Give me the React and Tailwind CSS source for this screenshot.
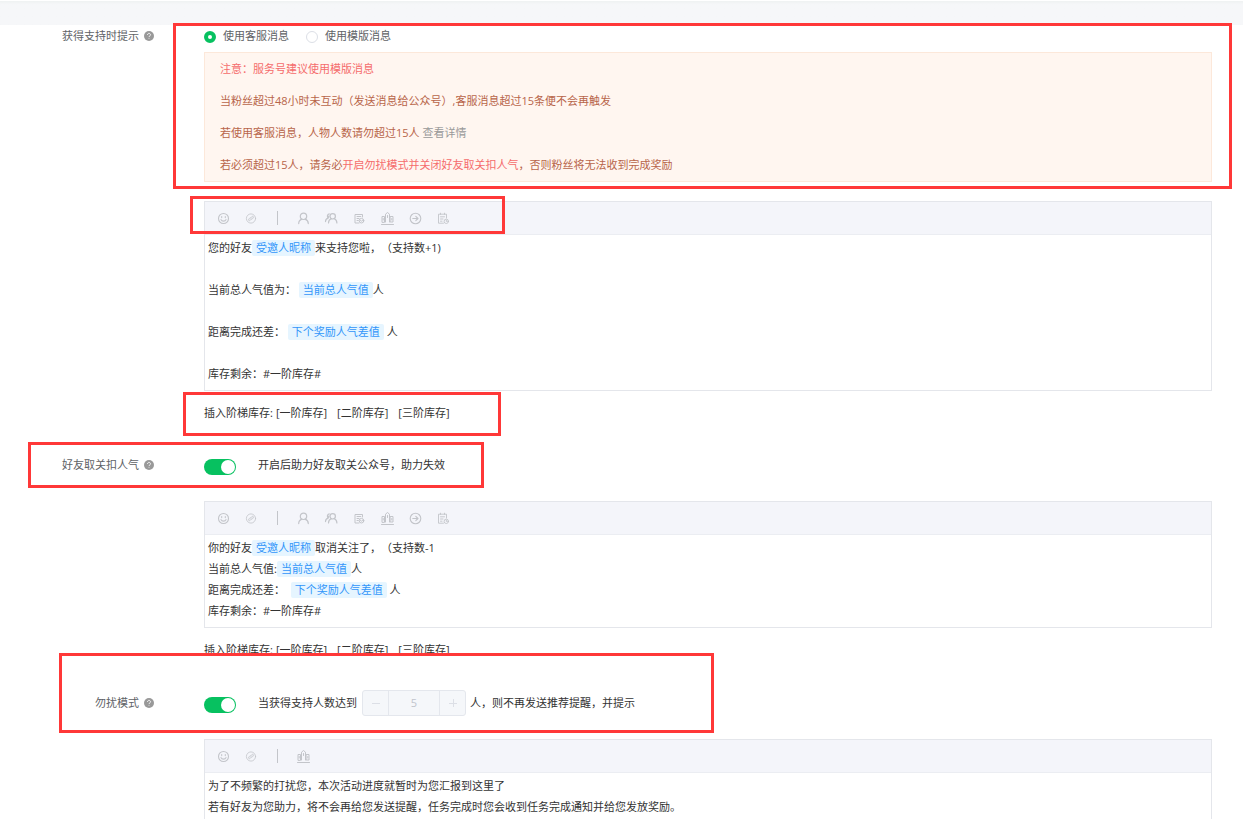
import React from "react";

const iconProps = {
  width: 14,
  height: 14,
  viewBox: "0 0 14 14",
  fill: "none",
  stroke: "currentColor",
  strokeWidth: 1.1,
  strokeLinecap: "round",
  strokeLinejoin: "round",
  "aria-hidden": true,
};

const SmileIcon = () => (
  <svg {...iconProps}>
    <circle cx="7.5" cy="7.5" r="5" />
    <path d="M5.7 5.6v1M9.3 5.6v1M5 8.6c.8 2 4.2 2 5 0" />
  </svg>
);

const LinkIcon = () => (
  <svg {...iconProps} strokeWidth="0.8">
    <circle cx="7" cy="7.5" r="4.6" />
    <path d="M6.8 6.6l1-1c1-1 2.4.4 1.4 1.4l-1.200 1.200M7.200 8.400l-1 1c-1 1-2.400-.4-1.400-1.400l1.200-1.200M6.200 8.300l1.600-1.600" />
  </svg>
);

const UserIcon = () => (
  <svg {...iconProps} strokeWidth="1.2">
    <circle cx="7.5" cy="5.3" r="3.2" />
    <path d="M2.7 12.6c0-2.4 1.3-3.800 3.200-4.500M12.300 12.600c0-2.400-1.300-3.800-3.200-4.500" />
  </svg>
);

const UsersIcon = () => (
  <svg {...iconProps} strokeWidth="1.2">
    <circle cx="8.700" cy="5.300" r="2.700" />
    <path d="M4.500 12c0-2.200 1-3.500 2.600-4.200M12.900 12c0-2.200-1-3.500-2.600-4.200M5.200 2.800C3.200 3 2.900 6 4.200 7.200 2.600 7.600 1.500 9 1.500 10.600M4.800 5.200l-.6 1.800" />
  </svg>
);

const FormIcon = () => (
  <svg {...iconProps} strokeWidth="1">
    <path d="M10.500 6V3.500h-7.500v8.500h4M5 5.500h3.800M5 7.500h2M5 9.500h1.300" />
    <circle cx="9.500" cy="9.700" r="2.300" />
    <path d="M8.500 9.500l1 .8 1.300-1.300" />
  </svg>
);

const RankIcon = () => (
  <svg {...iconProps} strokeWidth="1">
    <path d="M1.500 13.500h12M2 11V5.500h2.500V11zM5.500 11V3.200l2-1.700 2 1.700V11M10.500 5.500h2.500V11h-2.500zM7.500 4.500v2M3.200 7.500v1.500M11.800 7.500v1.500" />
  </svg>
);

const ArrowIcon = () => (
  <svg {...iconProps}>
    <circle cx="7.5" cy="7.5" r="5.3" />
    <path d="M4.800 7.500h5M7.800 5.300l2.200 2.200-2.200 2.200" />
  </svg>
);

const TaskIcon = () => (
  <svg {...iconProps} strokeWidth="0.9">
    <path d="M10.500 7V3.200h-8v9h5M4.500 2.200v1.200M8.500 2.200v1.200M4.500 5.800h4M4.500 8h2.500M4.500 10.200h1.500" />
    <circle cx="10.300" cy="10.300" r="2.200" />
    <path d="M10.300 9.200v1.200h1" />
  </svg>
);

const leadTools = [
  ["表情", SmileIcon],
  ["链接", LinkIcon],
];

const fullTools = [
  ["昵称", UserIcon],
  ["好友", UsersIcon],
  ["表单", FormIcon],
  ["排行", RankIcon],
  ["跳转", ArrowIcon],
  ["任务", TaskIcon],
];

const shortTools = [["排行", RankIcon]];

function ToolButton({ label, Icon }) {
  return (
    <button type="button" aria-label={label} className="h-3.5 w-3.5 shrink-0">
      <Icon />
    </button>
  );
}

function Editor({ label, tools, className, children }) {
  return (
    <div className={`flex flex-col border border-[#e4e6eb] ${className}`}>
      <div className="flex h-[33px] shrink-0 items-center gap-3.5 border-b border-[#ebedf2] bg-[#f4f5fa] pl-[11px] text-[#c3c5ca]">
        {leadTools.map(([name, Icon]) => (
          <ToolButton key={name} label={name} Icon={Icon} />
        ))}
        <span className="flex w-2.5 justify-center">
          <span className="h-3.5 w-px bg-[#c3c5ca]" />
        </span>
        {tools.map(([name, Icon]) => (
          <ToolButton key={name} label={name} Icon={Icon} />
        ))}
      </div>
      <div
        role="textbox"
        aria-multiline="true"
        aria-label={label}
        contentEditable
        suppressContentEditableWarning
        className="grow px-[3px] pt-0.5 pb-1.5 leading-[21px] text-[#333] outline-none"
      >
        {children}
      </div>
    </div>
  );
}

function Line({ children }) {
  return <p className="flex min-h-[21px] items-center whitespace-pre">{children}</p>;
}

function Tag({ children }) {
  return (
    <span className="rounded-xs bg-[#e6f5ff] px-1 leading-4 text-[#3296fa]">{children}</span>
  );
}

function InsertRow() {
  return (
    <div className="mt-[11px] flex h-[22px] items-center gap-2.5 text-[#333]">
      <span className="-mr-[7px]">插入阶梯库存:</span>
      <button type="button">[一阶库存]</button>
      <button type="button">[二阶库存]</button>
      <button type="button">[三阶库存]</button>
    </div>
  );
}

function HelpIcon() {
  return (
    <svg width="10" height="10" viewBox="0 0 10 10" aria-hidden="true">
      <circle cx="5" cy="5" r="5" fill="#999" />
      <path
        d="M3.5 3.9c0-2 3-2 3-.1 0 1.1-1.5 1.1-1.5 2.3M5 7.3v.6"
        fill="none"
        stroke="#fff"
        strokeWidth="0.9"
      />
    </svg>
  );
}

function FieldLabel({ htmlFor, children, className }) {
  return (
    <label
      htmlFor={htmlFor}
      className={`flex w-[154px] shrink-0 items-center justify-end gap-[5px] text-[#606266] ${className}`}
    >
      {children}
      <HelpIcon />
    </label>
  );
}

function Toggle({ id }) {
  return (
    <input
      id={id}
      type="checkbox"
      role="switch"
      defaultChecked
      className="mt-[3px] mr-[22px] flex h-4 w-8 shrink-0 appearance-none items-center rounded-full bg-[#c8c9cc] px-px before:h-3.5 before:w-3.5 before:rounded-full before:bg-white before:content-[''] checked:justify-end checked:bg-[#07c160]"
    />
  );
}

function Radio({ label, defaultChecked }) {
  return (
    <label className="flex items-center gap-[7px]">
      <input
        type="radio"
        name="support-notice"
        defaultChecked={defaultChecked}
        className="mt-px h-3 w-3 appearance-none rounded-full border border-[#dcdfe6] bg-white checked:border-4 checked:border-[#07c160]"
      />
      {label}
    </label>
  );
}

function Highlight({ className }) {
  return (
    <div aria-hidden="true" className={`pointer-events-none absolute border-3 border-[#ff3838] ${className}`} />
  );
}

export default function App() {
  return (
    <div className="relative flex min-h-screen flex-col bg-white font-['Open_Sans','Noto_Sans_CJK_SC',sans-serif] text-[11px] [text-spacing-trim:space-all]">
      <header className="h-[25px] shrink-0 border-t border-white bg-linear-to-b from-[#eff2f2] to-[#f6f7f9] to-15%" />

      <section className="flex gap-[50px] pr-[31px]">
        <FieldLabel className="h-[22px]">获得支持时提示</FieldLabel>
        <div className="min-w-0 grow">
          <div className="flex h-[22px] items-center gap-[17px] text-[#606266]">
            <Radio label="使用客服消息" defaultChecked />
            <Radio label="使用模版消息" />
          </div>
          <div className="mt-[5px] border border-[#fce8da] bg-[#fff6f0] px-[15px] leading-8 text-[#b8654a]">
            <p className="text-[#f56c6c]">注意：服务号建议使用模版消息</p>
            <p>当粉丝超过48小时未互动（发送消息给公众号）,客服消息超过15条便不会再触发</p>
            <p>
              若使用客服消息，人物人数请勿超过15人{" "}
              <a href="#detail" className="text-[#999]">查看详情</a>
            </p>
            <p>
              若必须超过15人，请务必
              <span className="text-[#f56c6c]">开启勿扰模式并关闭好友取关扣人气</span>
              ，否则粉丝将无法收到完成奖励
            </p>
          </div>
          <Editor label="支持提示内容" tools={fullTools} className="mt-[19px]">
            <Line>您的好友<Tag>受邀人昵称</Tag>来支持您啦，（支持数+1)</Line>
            <Line />
            <Line>当前总人气值为： <Tag>当前总人气值</Tag>人</Line>
            <Line />
            <Line>距离完成还差： <Tag>下个奖励人气差值</Tag> 人</Line>
            <Line />
            <Line>库存剩余：#一阶库存#</Line>
          </Editor>
          <InsertRow />
        </div>
      </section>

      <section className="mt-7 flex gap-[50px] pr-[31px]">
        <FieldLabel htmlFor="unfollow" className="h-[26px]">好友取关扣人气</FieldLabel>
        <div className="min-w-0 grow">
          <div className="flex h-[26px] items-center text-[#333]">
            <Toggle id="unfollow" />
            开启后助力好友取关公众号，助力失效
          </div>
          <Editor label="取关提示内容" tools={fullTools} className="mt-[23px]">
            <Line>你的好友<Tag>受邀人昵称</Tag>取消关注了，（支持数-1</Line>
            <Line>当前总人气值:<Tag>当前总人气值</Tag>人</Line>
            <Line>距离完成还差：  <Tag>下个奖励人气差值</Tag> 人</Line>
            <Line>库存剩余：#一阶库存#</Line>
          </Editor>
          <InsertRow />
        </div>
      </section>

      <section className="mt-[29px] flex grow gap-[50px] pr-[31px]">
        <FieldLabel htmlFor="quiet" className="h-[26px]">勿扰模式</FieldLabel>
        <div className="flex min-w-0 grow flex-col">
          <div className="flex h-[26px] shrink-0 items-center text-[#333]">
            <Toggle id="quiet" />
            <label htmlFor="limit">当获得支持人数达到</label>
            <div className="mr-1 ml-[5px] flex h-[26px] w-[104px] overflow-hidden rounded-[3px] border border-[#e4e7ed] bg-[#f5f7fa] text-[#dcdfe6]">
              <button type="button" disabled aria-label="减少" className="flex w-[25px] items-center justify-center">
                <svg width="8" height="8" viewBox="0 0 8 8" stroke="currentColor" aria-hidden="true">
                  <path d="M0 4.500h8" />
                </svg>
              </button>
              <input
                id="limit"
                disabled
                defaultValue="5"
                className="min-w-0 flex-1 border-x border-[#e4e7ed] text-center text-[#c0c4cc]"
              />
              <button type="button" disabled aria-label="增加" className="flex w-[25px] items-center justify-center">
                <svg width="8" height="8" viewBox="0 0 8 8" stroke="currentColor" aria-hidden="true">
                  <path d="M0 4.500h8M4.500 0v8" />
                </svg>
              </button>
            </div>
            <span>人，则不再发送推荐提醒，并提示</span>
          </div>
          <Editor label="勿扰提示内容" tools={shortTools} className="mt-[23px] grow border-b-0">
            <Line>为了不频繁的打扰您，本次活动进度就暂时为您汇报到这里了</Line>
            <Line>若有好友为您助力，将不会再给您发送提醒，任务完成时您会收到任务完成通知并给您发放奖励。</Line>
          </Editor>
        </div>
      </section>

      <Highlight className="top-[23px] right-[11px] left-[173px] h-[166px]" />
      <Highlight className="top-[196px] left-[190px] h-[38px] w-[315px]" />
      <Highlight className="top-[392px] left-[183px] h-[44px] w-[318px]" />
      <Highlight className="top-[442px] left-[28px] h-[46px] w-[456px]" />
      <Highlight className="top-[653px] left-[59px] h-[80px] w-[655px]" />
    </div>
  );
}
